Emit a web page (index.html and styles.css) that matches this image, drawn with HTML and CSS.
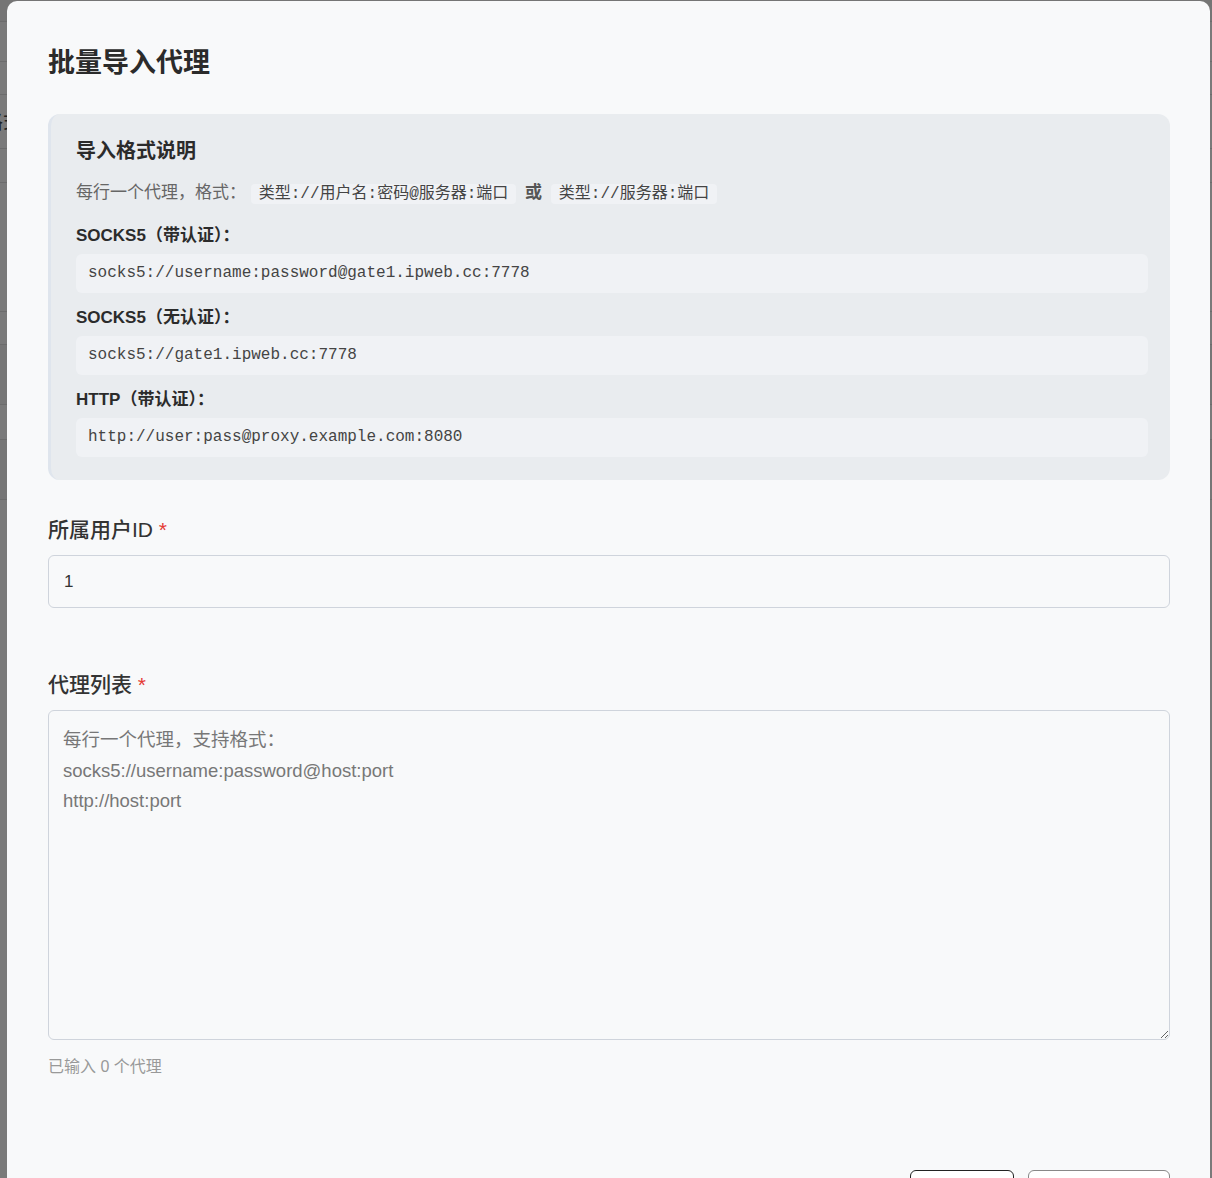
FILE: index.html
```html
<!DOCTYPE html>
<html lang="zh-CN">

<head>
    <meta charset="UTF-8">
    <meta name="viewport" content="width=device-width, initial-scale=1.0">
    <title>批量导入代理</title>

    <link rel="stylesheet" href="styles.css">

</head>

<body>

    <!-- page behind the dialog -->
    <div class="page">
        <div class="page-row head"></div>
        <div class="page-row h40"></div>
        <div class="page-row h33"></div>
        <div class="page-row h54"><span class="cut-text">格式</span></div>
        <div class="page-row h34"></div>
        <div class="page-row h129"></div>
        <div class="page-row h33"></div>
        <div class="page-row h60"></div>
        <div class="page-row h35"></div>
        <div class="page-row h60"></div>
    </div>

    <div class="mask"></div>

    <div class="modal">
        <h2 class="modal-title">批量导入代理</h2>

        <div class="format-box">
            <h4>导入格式说明</h4>
            <p class="format-line">
                每行一个代理，格式：
                <code>类型://用户名:密码@服务器:端口</code>
                <b>或</b>
                <code>类型://服务器:端口</code>
            </p>

            <div class="example">
                <div class="example-title">SOCKS5（带认证）：</div>
                <pre>socks5://username:password@gate1.ipweb.cc:7778</pre>
            </div>
            <div class="example">
                <div class="example-title">SOCKS5（无认证）：</div>
                <pre>socks5://gate1.ipweb.cc:7778</pre>
            </div>
            <div class="example">
                <div class="example-title">HTTP（带认证）：</div>
                <pre>http://user:pass@proxy.example.com:8080</pre>
            </div>
        </div>

        <form id="importForm">
            <div class="form-group">
                <label for="userId">所属用户ID <span class="required">*</span></label>
                <input type="text" id="userId" value="1">
            </div>

            <div class="form-group list-group">
                <label for="proxyList">代理列表 <span class="required">*</span></label>
                <textarea id="proxyList" placeholder="每行一个代理，支持格式：&#10;socks5://username:password@host:port&#10;http://host:port"></textarea>
                <div class="counter" id="counter">已输入 0 个代理</div>
            </div>

            <div class="actions">
                <button type="button" class="btn btn-cancel">取消</button>
                <button type="submit" class="btn btn-primary">开始导入</button>
            </div>
        </form>
    </div>

    <script>
        var list = document.getElementById('proxyList');
        list.addEventListener('input', function () {
            var n = list.value.split('\n').filter(function (l) { return l.trim() !== ''; }).length;
            document.getElementById('counter').textContent = '已输入 ' + n + ' 个代理';
        });
    </script>

</body>

</html>
```

FILE: styles.css
```css
* {
    box-sizing: border-box;
}

body {
    margin: 0;
    height: 1178px;
    overflow: hidden;
    background: #fff;
    font-family: "Liberation Sans", "Noto Sans CJK SC", sans-serif;
    color: #333;
}

/* background page */
.page {
    width: 100%;
}

.page .page-row {
    border-bottom: 1px solid #e2e2e2;
    height: 40px;
}

.page .head {
    height: 22px;
    background: #f4f4f4;
}

.page .h33 { height: 33px; }
.page .h54 { height: 54px; }
.page .h34 { height: 34px; }
.page .h129 { height: 129px; }
.page .h35 { height: 35px; }
.page .h60 { height: 60px; background: #f7f7f7; }

.page .cut-text {
    display: inline-block;
    margin-left: -17px;
    margin-top: 11px;
    font-size: 20px;
    color: #444;
}

.mask {
    position: fixed;
    inset: 0;
    background: rgba(0, 0, 0, 0.52);
}

/* dialog */
.modal {
    position: absolute;
    top: 1px;
    left: 7px;
    width: 1203px;
    height: 1240px;
    background: #f8f9fa;
    border-radius: 10px;
    padding: 44px 40px 0 41px;
}

.modal-title {
    margin: 0;
    font-size: 27px;
    line-height: 36px;
    font-weight: 700;
    color: #2b2b2b;
}

.format-box {
    margin-top: 33px;
    background: #e9ecef;
    border-left: 3px solid #dfe5ed;
    border-radius: 12px;
    padding: 23px 22px 23px 25px;
}

.format-box h4 {
    margin: 0;
    font-size: 20px;
    line-height: 28px;
    font-weight: 700;
    color: #2b2b2b;
}

.format-box .format-line {
    margin: 16px 0 0;
    font-size: 17px;
    line-height: 24px;
    color: #666;
}

.format-box .format-line b {
    color: #555;
    margin: 0 4px;
}

.format-box code {
    font-family: "Liberation Mono", "Noto Sans CJK SC", monospace;
    font-size: 16px;
    background: #f0f2f5;
    border-radius: 4px;
    padding: 1px 8px;
    color: #444;
}

.format-box .example {
    margin-top: 18px;
}

.format-box .example + .example {
    margin-top: 13px;
}

.format-box .example-title {
    font-size: 17px;
    line-height: 24px;
    font-weight: 700;
    color: #2b2b2b;
}

.format-box pre {
    margin: 6px 0 0;
    background: #f0f2f5;
    border-radius: 6px;
    padding: 9px 12px;
    font-family: "Liberation Mono", monospace;
    font-size: 16px;
    line-height: 21px;
    color: #444;
}

/* form */
.form-group {
    margin-top: 35px;
}

.form-group label {
    display: block;
    font-size: 21px;
    line-height: 30px;
    font-weight: 500;
    color: #333;
}

.form-group .required {
    color: #e53935;
}

.form-group input {
    display: block;
    width: 100%;
    margin-top: 10px;
    height: 53px;
    padding: 14px 15px;
    font-family: "Liberation Sans", "Noto Sans CJK SC", sans-serif;
    font-size: 17px;
    color: #333;
    background: #f8f9fa;
    border: 1px solid #cfd4dc;
    border-radius: 6px;
}

.list-group {
    margin-top: 62px;
}

.form-group textarea {
    display: block;
    width: 100%;
    margin-top: 10px;
    height: 330px;
    padding: 14px 14px;
    font-family: "Liberation Sans", "Noto Sans CJK SC", sans-serif;
    font-size: 18.5px;
    line-height: 30.5px;
    color: #333;
    background: #f8f9fa;
    border: 1px solid #cfd4dc;
    border-radius: 6px;
}

.form-group textarea::placeholder {
    color: #777;
}

.form-group input:focus,
.form-group textarea:focus {
    outline: none;
}

.counter {
    margin-top: 16px;
    font-size: 16px;
    line-height: 22px;
    color: #999;
}

.actions {
    display: flex;
    justify-content: flex-end;
    gap: 14px;
    margin-top: 92px;
}

.btn {
    height: 44px;
    font-size: 16px;
    border-radius: 6px;
    background: #fff;
    font-family: "Liberation Sans", "Noto Sans CJK SC", sans-serif;
}

.btn-cancel {
    width: 104px;
    border: 1px solid #222;
    color: #333;
}

.btn-primary {
    width: 142px;
    border: 1px solid #888;
    color: #333;
}
```
